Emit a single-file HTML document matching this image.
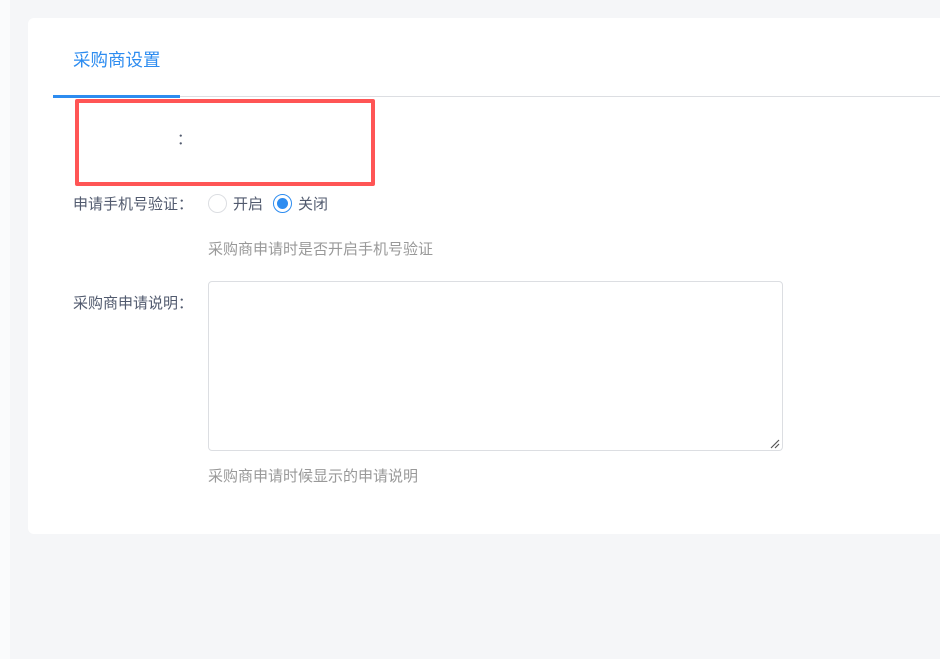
<!DOCTYPE html>
<html><head><meta charset="utf-8"><style>
*{margin:0;padding:0;box-sizing:border-box}
body{width:940px;height:659px;background:#f5f6f8;position:relative;overflow:hidden;font-family:"Liberation Sans","Noto Sans CJK SC",sans-serif;}
.strip{position:absolute;left:0;top:0;width:10px;height:659px;background:#fafbfc}
.card{position:absolute;left:28px;top:18px;width:930px;height:516px;background:#fff;border-radius:6px}
.abs{position:absolute;white-space:nowrap}
.lbl{font-size:15px;color:#515a6e}
.help{font-size:15px;color:#999}
.radio{position:absolute;width:19px;height:19px;border-radius:50%;border:1px solid #dcdee2;background:#fff}
.radio.on{border-color:#2d8cf0}
.radio.on::after{content:"";position:absolute;left:3px;top:3px;width:11px;height:11px;border-radius:50%;background:#2d8cf0}
</style></head><body>
<div class="strip"></div>
<div class="card"></div>
<div class="abs" style="left:73px;top:47px;font-size:17.5px;color:#2d8cf0">采购商设置</div>
<div class="abs" style="left:53px;top:96px;width:887px;height:1px;background:#dcdee2"></div>
<div class="abs" style="left:53px;top:95px;width:127px;height:3px;background:#2d8cf0"></div>
<div class="abs" style="left:75px;top:99px;width:300px;height:87px;border:4px solid #f55;border-radius:2px"></div>
<div class="abs lbl" style="left:177px;top:128px">：</div>
<div class="abs lbl" style="left:73px;top:193px">申请手机号验证：</div>
<div class="radio" style="left:208px;top:194px"></div>
<div class="abs lbl" style="left:233px;top:193px">开启</div>
<div class="radio on" style="left:273px;top:194px"></div>
<div class="abs lbl" style="left:298px;top:193px">关闭</div>
<div class="abs help" style="left:208px;top:238px">采购商申请时是否开启手机号验证</div>
<div class="abs lbl" style="left:73px;top:292px">采购商申请说明：</div>
<div class="abs" style="left:208px;top:281px;width:575px;height:170px;border:1px solid #dcdee2;border-radius:4px"></div>
<svg class="abs" style="left:770px;top:439px" width="12" height="10"><path d="M1 9L9 1M5 9L9 5" stroke="#555" stroke-width="1.2"/></svg>
<div class="abs help" style="left:208px;top:465px">采购商申请时候显示的申请说明</div>
</body></html>
